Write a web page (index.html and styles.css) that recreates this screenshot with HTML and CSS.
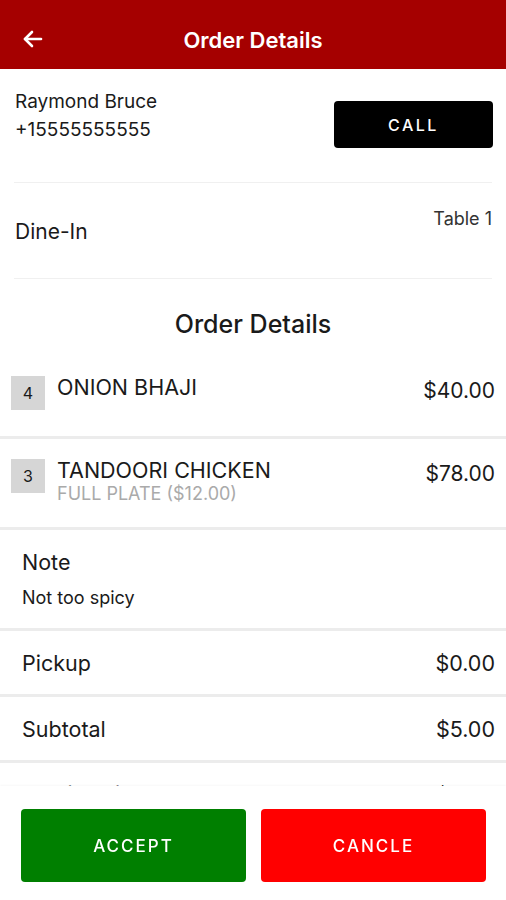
FILE: index.html
```html
<!DOCTYPE html>
<html lang="en">
<head>
    <meta charset="UTF-8">
    <meta name="viewport" content="width=device-width, initial-scale=1.0">
    <title>Order Details</title>
    <link rel="stylesheet" href="styles.css">
</head>
<body>
    <header class="topbar">
        <button class="back-btn" aria-label="Back">
            <svg width="24" height="24" viewBox="0 0 24 24" fill="none" stroke="#fff" stroke-width="2.6" stroke-linecap="round" stroke-linejoin="round">
                <path d="M20 12H4"/>
                <path d="M11 5l-7 7 7 7"/>
            </svg>
        </button>
        <h1>Order Details</h1>
    </header>

    <main class="content">
        <section class="customer">
            <div class="customer-info">
                <p class="customer-name">Raymond Bruce</p>
                <p class="customer-phone">+15555555555</p>
            </div>
            <button class="call-btn">CALL</button>
        </section>

        <section class="order-type">
            <span class="type-label">Dine-In</span>
            <span class="type-table">Table 1</span>
        </section>

        <h2 class="section-title">Order Details</h2>

        <div class="item">
            <span class="qty">4</span>
            <div class="item-info">
                <p class="item-name">ONION BHAJI</p>
            </div>
            <span class="item-price">$40.00</span>
        </div>

        <div class="item">
            <span class="qty">3</span>
            <div class="item-info">
                <p class="item-name">TANDOORI CHICKEN</p>
                <p class="item-option">FULL PLATE ($12.00)</p>
            </div>
            <span class="item-price">$78.00</span>
        </div>

        <div class="note">
            <p class="note-label">Note</p>
            <p class="note-text">Not too spicy</p>
        </div>

        <div class="summary-row">
            <span>Pickup</span>
            <span>$0.00</span>
        </div>
        <div class="summary-row">
            <span>Subtotal</span>
            <span>$5.00</span>
        </div>
        <div class="summary-row">
            <span>Tax (10%)</span>
            <span>$0.50</span>
        </div>
        <div class="summary-row total">
            <span>Total</span>
            <span>$5.50</span>
        </div>
    </main>

    <footer class="actions">
        <button class="action-btn accept">ACCEPT</button>
        <button class="action-btn cancel">CANCLE</button>
    </footer>
</body>
</html>
```

FILE: styles.css
```css
* {
    margin: 0;
    padding: 0;
    box-sizing: border-box;
}

body {
    font-family: Inter, 'Noto Sans', sans-serif;
    background: #fff;
    color: #1a1a1a;
}

button {
    font-family: inherit;
    border: none;
    cursor: pointer;
}

.topbar {
    height: 69px;
    background: #a50000;
    display: flex;
    align-items: center;
    justify-content: center;
    padding-top: 11px;
    position: relative;
}

.topbar h1 {
    color: #fff;
    font-size: 22px;
    font-weight: 600;
}

.back-btn {
    position: absolute;
    left: 21px;
    top: 27px;
    background: none;
    display: flex;
}

.content {
    padding-bottom: 120px;
}

.customer {
    display: flex;
    justify-content: space-between;
    align-items: flex-start;
    padding: 19px 13px 0 15px;
    height: 113px;
}

.customer-name,
.customer-phone {
    font-size: 19px;
    line-height: 28px;
}

.call-btn {
    margin-top: 13px;
    width: 159px;
    height: 47px;
    background: #000;
    color: #fff;
    border-radius: 4px;
    font-size: 16px;
    font-weight: 500;
    letter-spacing: 2.5px;
}

.order-type {
    margin: 0 14px;
    height: 97px;
    border-top: 1px solid #f0f0f0;
    border-bottom: 1px solid #f0f0f0;
    display: flex;
    justify-content: space-between;
    align-items: flex-start;
    padding-top: 25px;
}

.type-label {
    font-size: 21px;
    margin-top: 11px;
    margin-left: 1px;
}

.type-table {
    font-size: 18px;
    color: #333;
}

.section-title {
    text-align: center;
    font-size: 25px;
    font-weight: 500;
    padding: 30px 0 17px;
}

.item {
    display: flex;
    align-items: flex-start;
    padding: 20px 11px 20px 11px;
    border-bottom: 3px solid #ececec;
}

.qty {
    width: 34px;
    height: 34px;
    background: #d6d6d6;
    display: flex;
    align-items: center;
    justify-content: center;
    font-size: 16px;
    flex-shrink: 0;
}

.item-info {
    flex: 1;
    min-height: 40px;
    padding-left: 12px;
}

.item-name {
    font-size: 21.5px;
    line-height: 22px;
}

.item-option {
    font-size: 18px;
    color: #aaa;
    line-height: 26px;
}

.item-price {
    font-size: 21px;
    line-height: 30px;
}

.note {
    padding: 18px 22px 0;
    height: 101px;
    border-bottom: 3px solid #ececec;
}

.note-label {
    font-size: 21.5px;
    line-height: 28px;
}

.note-text {
    font-size: 18px;
    line-height: 24px;
    margin-top: 10px;
}

.summary-row {
    display: flex;
    justify-content: space-between;
    align-items: center;
    height: 66px;
    padding: 0 11px 0 22px;
    border-bottom: 3px solid #ececec;
    font-size: 21.5px;
}

.actions {
    position: fixed;
    left: 0;
    right: 0;
    bottom: 0;
    height: 114px;
    background: #fff;
    display: flex;
    gap: 15px;
    padding: 23px 20px 18px 21px;
    box-shadow: 0 -1px 2px rgba(0, 0, 0, 0.03);
}

.action-btn {
    flex: 1;
    height: 73px;
    border-radius: 4px;
    color: #fff;
    font-size: 17px;
    font-weight: 500;
    letter-spacing: 2px;
}

.accept {
    background: #007f00;
}

.cancel {
    background: #ff0000;
}
```
